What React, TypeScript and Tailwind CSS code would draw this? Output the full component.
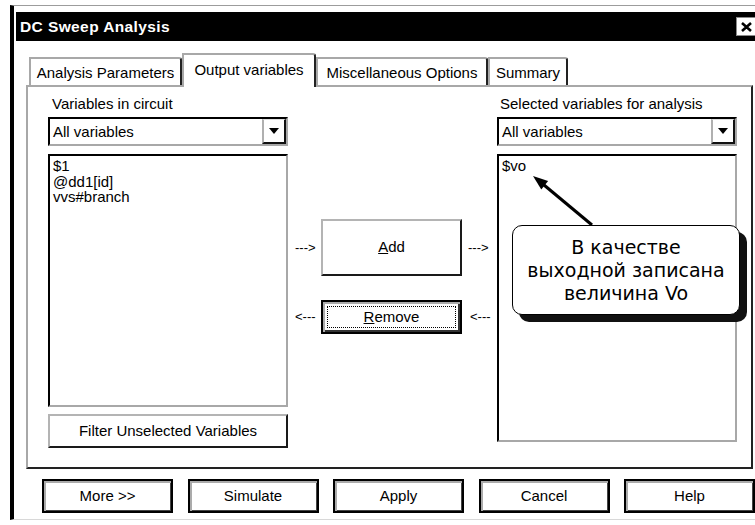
import { type ReactNode } from "react";

const sunken =
  "border-2 border-t-black border-l-black border-r-[#a8a8a8] border-b-[#a8a8a8] bg-white";

function Combo({ label }: { label: string }) {
  return (
    <div className={`${sunken} h-[29px] flex items-center`}>
      <span className="flex-1 pl-[3px] leading-[17px]">{label}</span>
      <div className="w-[24px] h-[25px] border-l-2 border-l-[#b0b0b0] border-t border-t-[#e0e0e0] border-r-2 border-b-2 border-r-[#111] border-b-[#111] flex items-center justify-center">
        <svg width="10" height="6" viewBox="0 0 10 6">
          <polygon points="0,0 10,0 5,6" fill="#000" />
        </svg>
      </div>
    </div>
  );
}

function Raised({ children, className = "" }: { children: ReactNode; className?: string }) {
  return (
    <div
      className={`border-2 border-t-[#b4b4b4] border-l-[#b4b4b4] border-r-[#1a1a1a] border-b-[#1a1a1a] bg-white flex items-center justify-center ${className}`}
    >
      {children}
    </div>
  );
}

function DlgButton({ children }: { children: ReactNode }) {
  return (
    <div className="w-[131px] h-[34px] border-2 border-black shadow-[inset_2px_2px_0_#ababab,inset_-1px_-1px_0_#444] bg-white flex items-center justify-center">
      {children}
    </div>
  );
}

function Tab({ children, className = "" }: { children: ReactNode; className?: string }) {
  return (
    <div
      className={`border-t-2 border-l-2 border-t-[#a8a8a8] border-l-[#a8a8a8] border-r-2 border-r-[#222] rounded-tr-[3px] bg-white flex justify-center leading-[17px] ${className}`}
    >
      {children}
    </div>
  );
}

export default function App() {
  return (
    <div className="relative w-[755px] h-[525px] overflow-hidden bg-white text-black text-[15px] font-['Liberation_Sans',Arial,sans-serif]">
      <div className="ml-[10px] mt-[5px] w-[746px] h-[515px] border-t border-t-[#9c9c9c] border-l-4 border-l-black border-b border-b-[#d8d8d8] flex flex-col">
        {/* title bar */}
        <div className="mt-[6px] ml-[2px] h-[29px] bg-black flex items-center">
          <span className="pl-[4px] font-bold text-white tracking-[0.4px] text-[15.5px] leading-[17px]">DC Sweep Analysis</span>
          <div className="ml-auto w-[20px] h-[19px] bg-white border border-[#8a8a8a] flex items-center justify-center">
            <svg width="11" height="10" viewBox="0 0 11 10">
              <path d="M1 1 L10 9 M10 1 L1 9" stroke="#000" strokeWidth="2.6" />
            </svg>
          </div>
        </div>

        {/* tabs */}
        <div className="mt-[12px] ml-[15px] h-[32px] flex items-end">
          <Tab className="w-[153px] h-[28px] items-center">Analysis Parameters</Tab>
          <Tab className="w-[134px] h-[34px] -mb-[2px] relative z-10 items-start pt-[6px]">Output variables</Tab>
          <Tab className="w-[172px] h-[28px] items-center">Miscellaneous Options</Tab>
          <Tab className="w-[80px] h-[28px] items-center">Summary</Tab>
        </div>

        {/* panel */}
        <div className="ml-[12px] w-[727px] h-[384px] border-2 border-t-[#a8a8a8] border-l-[#a8a8a8] border-r-[#222] border-b-[#222] flex">
          <div className="ml-[20px] w-[240px] pt-[8px] flex flex-col">
            <div className="pl-[4px] h-[17px] leading-[17px]">Variables in circuit</div>
            <div className="mt-[5px]">
              <Combo label="All variables" />
            </div>
            <div className={`${sunken} mt-[8px] h-[253px] pl-[3px] pt-[2px] leading-[15.5px]`}>
              <div>$1</div>
              <div>@dd1[id]</div>
              <div>vvs#branch</div>
            </div>
            <Raised className="mt-[7px] h-[34px]">Filter Unselected Variables</Raised>
          </div>

          <div className="w-[209px] pt-[132px] flex flex-col text-[13px]">
            <div className="h-[57px] flex items-center">
              <span className="w-[33px] pl-[7px]">---&gt;</span>
              <Raised className="w-[141px] h-[57px] text-[15px]">
                <span>
                  <span className="underline">A</span>dd
                </span>
              </Raised>
              <span className="pl-[6px]">---&gt;</span>
            </div>
            <div className="mt-[24px] h-[34px] flex items-center">
              <span className="w-[33px] pl-[7px]">&lt;---</span>
              <div className="w-[141px] h-[34px] border-2 border-black shadow-[inset_2px_2px_0_#ababab,inset_-2px_-2px_0_#333] bg-white p-[4px] text-[15px]">
                <div className="h-full border border-dotted border-black flex items-center justify-center">
                  <span>
                    <span className="underline">R</span>emove
                  </span>
                </div>
              </div>
              <span className="pl-[8px]">&lt;---</span>
            </div>
          </div>

          <div className="w-[240px] pt-[8px] flex flex-col">
            <div className="pl-[3px] h-[17px] leading-[17px]">Selected variables for analysis</div>
            <div className="mt-[5px]">
              <Combo label="All variables" />
            </div>
            <div className={`${sunken} mt-[8px] h-[288px] pl-[3px] pt-[2px] leading-[15.5px]`}>
              <div>$vo</div>
            </div>
          </div>
        </div>

        {/* bottom buttons */}
        <div className="mt-[10px] ml-[28px] flex gap-[14.5px]">
          <DlgButton>More &gt;&gt;</DlgButton>
          <DlgButton>Simulate</DlgButton>
          <DlgButton>Apply</DlgButton>
          <DlgButton>Cancel</DlgButton>
          <DlgButton>Help</DlgButton>
        </div>
      </div>

      {/* annotation arrow */}
      <svg className="absolute left-[525px] top-[170px]" width="75" height="60" viewBox="0 0 75 60">
        <path d="M67 55 L19 15" stroke="#000" strokeWidth="3" />
        <polygon points="8,6 23.1,11 16.3,19.6" fill="#000" />
      </svg>

      {/* annotation callout */}
      <div className="absolute left-[512px] top-[225px] w-[228px] h-[90px] rounded-[10px] border-[1.5px] border-black bg-white shadow-[7px_7px_0_#111] flex flex-col items-center justify-center text-[19px] leading-[23px] font-['DejaVu_Sans',sans-serif]">
        <div>В качестве</div>
        <div>выходной записана</div>
        <div>величина Vo</div>
      </div>
    </div>
  );
}
